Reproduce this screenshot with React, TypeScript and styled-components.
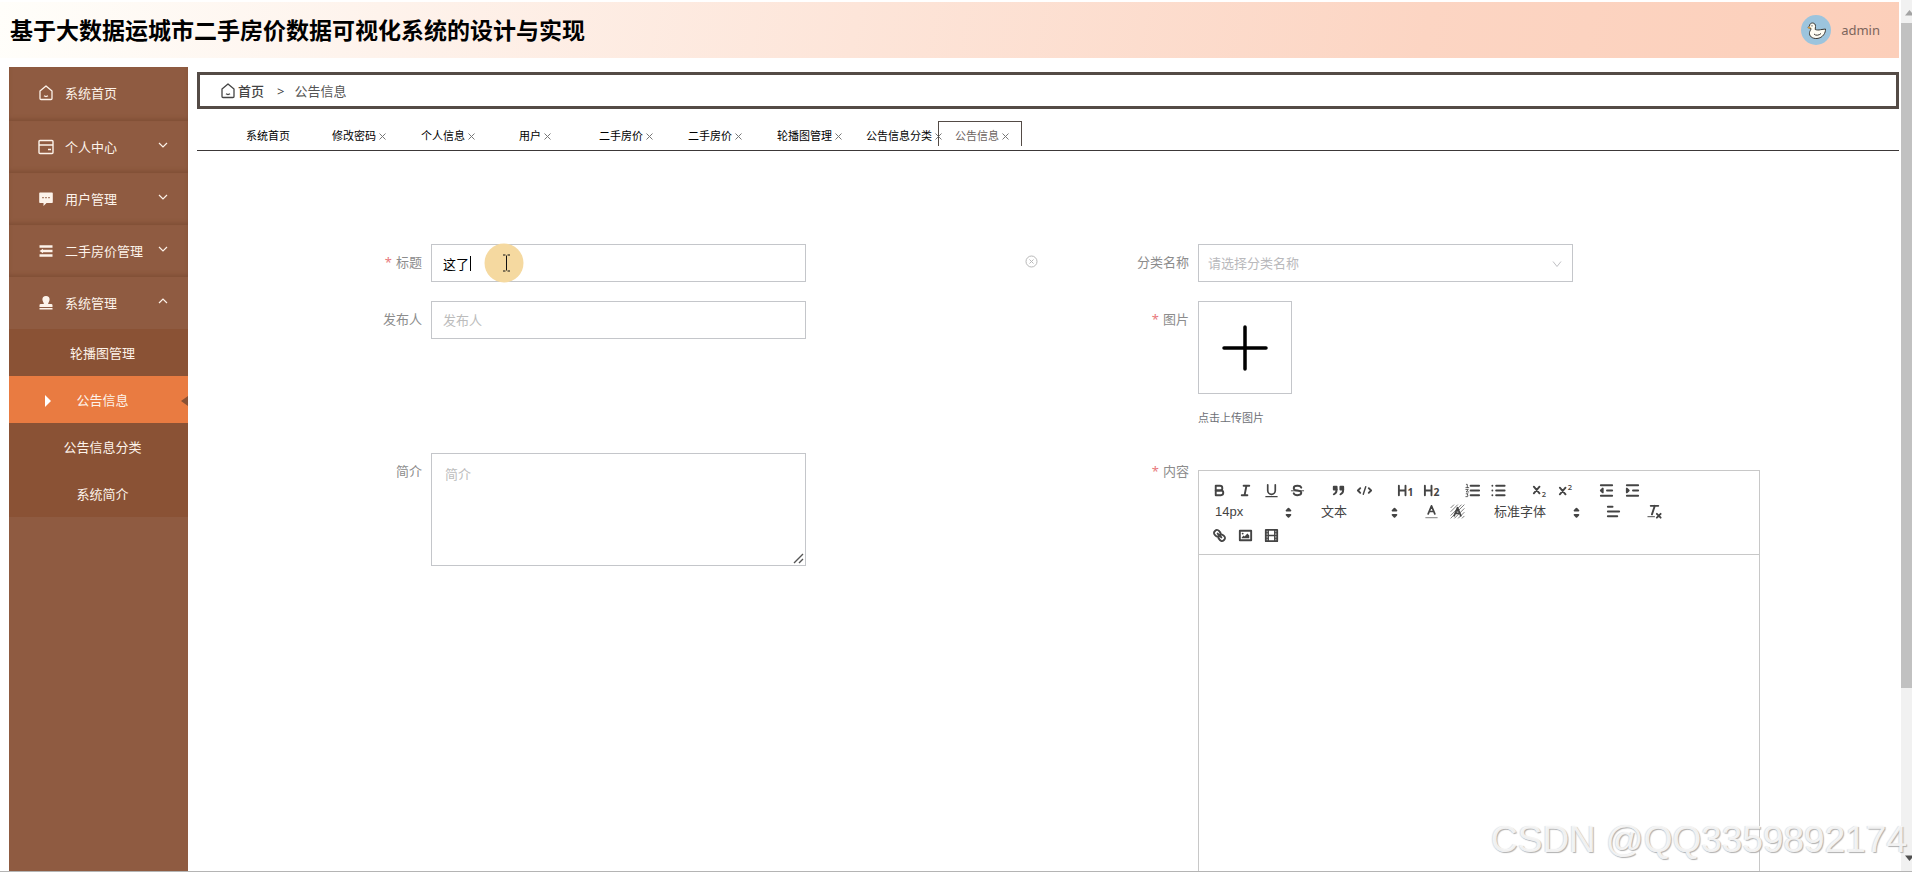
import React from 'react';
import styled, { createGlobalStyle, css } from 'styled-components';

const GlobalStyle = createGlobalStyle`
  * { box-sizing: border-box; }
  body {
    margin: 0;
    background: #fff;
    font-family: "Noto Sans", "Noto Sans CJK SC", sans-serif;
    font-size: 13px;
    line-height: 20px;
    color: #000;
  }
  button, input, select, textarea { font: inherit; color: inherit; }
  button { background: none; border: 0; padding: 0; cursor: pointer; }
  a { color: inherit; text-decoration: none; }
`;

const Screen = styled.div`
  position: relative;
  display: flex;
  gap: 2px;
  height: 100vh;
  overflow: hidden;
  border-bottom: 1px solid #b4b4b4;
`;

const Page = styled.div`
  flex: 1;
  min-width: 0;
  display: flex;
  flex-direction: column;
  padding-top: 2px;
`;

const Header = styled.header`
  flex: none;
  display: flex;
  align-items: center;
  justify-content: space-between;
  height: 56px;
  padding: 0 19px 0 10px;
  background: linear-gradient(100deg, #fffefa 0%, #fef3ec 20%, #fde5d9 45%, #fcd5c3 75%, #fccfba 100%);
`;

const SystemTitle = styled.h1`
  margin: 0;
  font-size: 23px;
  line-height: 32px;
  font-weight: 700;
  white-space: nowrap;
`;

const Account = styled.div`
  display: flex;
  align-items: center;
  gap: 10px;
  color: #7d655b;
`;

const Body = styled.div`
  flex: 1;
  min-height: 0;
  display: flex;
  gap: 9px;
  padding: 9px 0 0 9px;
`;

const Sidebar = styled.nav`
  flex: none;
  width: 179px;
  background: #8f5b41;
  color: #fdf3ea;
`;

const MenuItem = styled.button<{ $first?: boolean; $last?: boolean }>`
  display: flex;
  align-items: center;
  width: 100%;
  height: ${p => (p.$first ? 54 : 52)}px;
  padding: 0 20px ${p => (p.$first ? 2 : 0)}px 29px;
  text-align: left;
  ${p => !p.$last && css`box-shadow: inset 0 -3px 4px -1px #7f4e35;`}
`;

const MenuText = styled.span`
  flex: 1;
  margin-left: 11px;
  white-space: nowrap;
`;

const SubMenu = styled.div`
  background: #8a5235;
`;

const SubItem = styled.a<{ $active?: boolean }>`
  position: relative;
  display: flex;
  align-items: center;
  justify-content: center;
  height: 47px;
  padding-left: 8px;
  background: ${p => (p.$active ? '#e97b41' : 'transparent')};
`;

const ActiveMark = styled.svg<{ $side: 'left' | 'right' }>`
  position: absolute;
  top: 50%;
  margin-top: -5px;
  ${p => (p.$side === 'left' ? 'left: 36px;' : 'right: 0;')}
`;

const Main = styled.main`
  flex: 1;
  min-width: 0;
  padding-top: 5px;
`;

const Breadcrumb = styled.div`
  display: flex;
  align-items: center;
  height: 37px;
  padding-left: 20px;
  border: 3px solid #544b46;
  color: #555;
`;

const Home = styled.a`
  display: flex;
  align-items: center;
  gap: 2px;
  color: #444;
  font-weight: 500;
`;

const Separator = styled.span`
  margin: 0 10px 0 13px;
  color: #444;
`;

const Tabs = styled.div`
  display: flex;
  align-items: flex-start;
  gap: 5px;
  height: 42px;
  padding: 12px 0 0 29px;
  border-bottom: 1px solid #3c3838;
`;

const Tab = styled.div<{ $active?: boolean }>`
  flex: none;
  width: 84px;
  height: 25px;
  padding: 0 16px;
  border: 1px solid ${p => (p.$active ? '#544b46' : 'transparent')};
  border-bottom: 0;
  font-size: 11px;
  line-height: 28px;
  text-align: center;
  white-space: nowrap;
  color: ${p => (p.$active ? '#6b625e' : '#000')};
`;

const TabClose = styled.button`
  margin-left: 3px;
  line-height: 11px;
  color: #777;
`;

const Form = styled.form`
  display: grid;
  grid-template-columns: 1fr 1fr;
  grid-template-rows: 57px 152px auto;
  padding: 93px 84px 0;
`;

const Field = styled.div`
  display: flex;
  align-items: flex-start;
  min-width: 0;
`;

const Label = styled.label<{ $required?: boolean }>`
  flex: none;
  width: 150px;
  padding-right: 9px;
  line-height: 37px;
  text-align: right;
  color: #8c8c8c;
  ${p => p.$required && css`&::before { content: '*'; margin-right: 4px; color: #e8787c; }`}
`;

const Control = styled.div`
  position: relative;
  width: 100%;
  max-width: 375px;
`;

const boxStyle = css`
  display: block;
  width: 100%;
  border: 1px solid #c4c6ca;
  border-radius: 0;
  background: #fff;
  outline: none;
  &::placeholder { color: #bcbcbc; opacity: 1; }
`;

const TextInput = styled.input`
  ${boxStyle}
  height: 38px;
  padding: 0 11px;
`;

const TextArea = styled.textarea`
  ${boxStyle}
  height: 113px;
  padding: 10px 13px;
  resize: none;
`;

const SelectBox = styled.select`
  ${boxStyle}
  height: 38px;
  padding: 0 9px;
  appearance: none;
  color: #b9b9bc;
`;

const SelectArrow = styled.svg`
  position: absolute;
  right: 11px;
  top: 15px;
  pointer-events: none;
`;

const ResizeGrip = styled.svg`
  position: absolute;
  right: 2px;
  bottom: 2px;
  pointer-events: none;
`;

const Caret = styled.span`
  position: absolute;
  left: 39px;
  top: 12px;
  width: 1px;
  height: 15px;
  background: #000;
`;

const Pointer = styled.svg`
  position: absolute;
  left: 53px;
  top: -1px;
  pointer-events: none;
`;

const Spacer = styled.div`
  flex: 1;
`;

const ClearButton = styled.button`
  flex: none;
  display: flex;
  margin: 11px 10px 0 0;
`;

const UploadButton = styled.button`
  display: flex;
  align-items: center;
  justify-content: center;
  width: 94px;
  height: 93px;
  border: 1px solid #c4c6ca;
`;

const UploadTip = styled.p`
  margin: 14px 0 0;
  font-size: 11px;
  color: #6d7076;
`;

const Editor = styled.div`
  flex: 1;
  max-width: 562px;
  margin-top: 17px;
  border: 1px solid #c8c8c8;
`;

const Toolbar = styled.div`
  padding: 9px 6px 8px 7px;
  border-bottom: 1px solid #c8c8c8;
  color: #444;
`;

const ToolRow = styled.div`
  display: flex;
  align-items: center;
  gap: 15px;
  height: 21px;
  &:last-child { margin-top: 3px; }
`;

const ToolGroup = styled.div`
  display: flex;
`;

const ToolButton = styled.button`
  display: flex;
  align-items: center;
  justify-content: center;
  width: 26px;
  height: 21px;
`;

const Picker = styled.div<{ $wide?: boolean }>`
  position: relative;
  width: ${p => (p.$wide ? 100 : 91)}px;
`;

const PickerSelect = styled.select`
  display: block;
  width: 100%;
  height: 21px;
  padding: 0 0 0 9px;
  border: 0;
  background: none;
  appearance: none;
  font-family: "Liberation Sans", "Noto Sans CJK SC", sans-serif;
  color: #444;
`;

const PickerArrows = styled.svg`
  position: absolute;
  right: 0;
  top: 3px;
  pointer-events: none;
`;

const EditorBody = styled.div`
  min-height: 460px;
  padding: 12px 15px;
  outline: none;
`;

const ScrollTrack = styled.div`
  flex: none;
  display: flex;
  flex-direction: column;
  justify-content: space-between;
  width: 11px;
  padding: 9px 0;
  background: #f1f1f1;
  overflow: hidden;
`;

const ScrollThumb = styled.div`
  flex: none;
  height: 78%;
  margin: 7px 0 auto;
  background: #c1c1c1;
`;

const ScrollArrow = styled.svg`
  flex: none;
  margin-left: 4px;
`;

const Watermark = styled.div`
  position: absolute;
  right: 5px;
  bottom: 10px;
  font-family: "Liberation Sans", sans-serif;
  font-size: 37px;
  line-height: 42px;
  color: rgba(250, 250, 250, 0.9);
  text-shadow: 1px 1px 1px #b0b0b0, -1px 0 1px #e0e0e0;
  white-space: nowrap;
  pointer-events: none;
`;

const HomeIcon = ({ size = 16 }: { size?: number }) => (
  <svg width={size} height={size} viewBox="0 0 16 16" fill="none" stroke="currentColor" strokeWidth="1.3" strokeLinejoin="round">
    <path d="M2 6 8 1l6 5v7.5a1 1 0 0 1-1 1H3a1 1 0 0 1-1-1Z" />
    <path d="M6 10.8q2 1.4 4 0" />
  </svg>
);

const CardIcon = () => (
  <svg width="16" height="16" viewBox="0 0 16 16" fill="none" stroke="currentColor" strokeWidth="1.4">
    <rect x="1" y="1.5" width="14" height="13" rx="1" />
    <path d="M1 6h14M10 10.5h3" />
  </svg>
);

const ChatIcon = () => (
  <svg width="16" height="16" viewBox="0 0 16 16">
    <path fill="currentColor" d="M2 1.5h12a.8.8 0 0 1 .8.8v9a.8.8 0 0 1-.8.8H8.500L5.500 15v-2.900H2a.8.8 0 0 1-.8-.8v-9a.8.8 0 0 1 .8-.8Z" />
    <path stroke="#8f5b41" strokeWidth="1.300" d="M4.300 6.700h1.400M7.300 6.700h1.400M10.300 6.700h1.400" />
  </svg>
);

const ListIcon = () => (
  <svg width="16" height="16" viewBox="0 0 16 16" fill="none" stroke="currentColor" strokeWidth="2.600">
    <path d="M1.500 3.500h13M5 8h9.500M1.500 12.500h13" />
    <path d="M1.500 8 5 5.800v4.400Z" fill="currentColor" stroke="none" />
  </svg>
);

const StampIcon = () => (
  <svg width="16" height="16" viewBox="0 0 16 16" fill="currentColor">
    <path d="M8 1a3.600 3.600 0 0 1 3.600 3.700c0 1.600-1.500 2.700-1.500 4.300h3.100a1.300 1.300 0 0 1 1.300 1.300v1.700h-13v-1.700A1.300 1.300 0 0 1 2.800 9h3.100c0-1.600-1.500-2.700-1.500-4.300A3.600 3.600 0 0 1 8 1ZM1.500 13h13v1.500h-13Z" />
  </svg>
);

const Chevron = ({ up }: { up?: boolean }) => (
  <svg width="10" height="12" viewBox="0 0 10 12" fill="none" stroke="currentColor" strokeWidth="1.200">
    <path d={up ? 'M1 6l4-4 4 4' : 'M1 2l4 4 4-4'} />
  </svg>
);

const DuckAvatar = () => (
  <svg width="30" height="30" viewBox="0 0 30 30" role="img" aria-label="avatar">
    <circle cx="15" cy="15" r="15" fill="#9cc4dd" />
    <path
      d="M7 12.500 8.500 11c0-2 1.500-3 3-3 2 0 3.200 1.500 3 3.500l-.3 3c1.500.6 3.500.7 5.300.2l5-.7c.3 3.500-2.500 9-8.500 9.500-5 .3-8-2.500-7.500-6 .2-1.500 1.500-2.500 1.500-4Z"
      fill="#fffdf3" stroke="#3b3a36" strokeWidth="1" strokeLinejoin="round"
    />
    <path d="M13 19c1.500 1.800 5 1.600 7-.5" fill="none" stroke="#3b3a36" strokeWidth="1" />
    <path d="M7 12.500l2.500.4" stroke="#d99a3c" strokeWidth="1.500" />
    <circle cx="11" cy="10.800" r=".6" fill="#222" />
  </svg>
);

const ToolIcon = ({ children }: { children: React.ReactNode }) => (
  <svg width="17" height="17" viewBox="0 0 18 18" fill="none" stroke="#444" strokeWidth="2" strokeLinecap="round" strokeLinejoin="round">
    {children}
  </svg>
);

const Glyph = ({ x, y, size, children, weight = 700 }: { x: number; y: number; size: number; children: string; weight?: number }) => (
  <text x={x} y={y} fontSize={size} fontWeight={weight} fontFamily="Open Sans, sans-serif" fill="#444" stroke="none">
    {children}
  </text>
);

const icons: Record<string, React.ReactNode> = {
  bold: (
    <>
      <path d="M5 4h4.500a2.500 2.500 0 0 1 0 5H5Z" />
      <path d="M5 9h5.500a2.500 2.500 0 0 1 0 5H5Z" />
    </>
  ),
  italic: <path d="M7 4h6M5 14h6M8 14l2-10" />,
  underline: (
    <>
      <path d="M5 3v6a4 4 0 0 0 8 0V3" strokeWidth="1.800" />
      <path d="M3 15.500h12" strokeWidth="1.200" />
    </>
  ),
  strike: (
    <>
      <path d="M13 6C12.500 4.700 11 4 9 4 6.700 4 5 5 5 6.500S6.500 8.700 9 9s4 1 4 2.500S11.300 14 9 14c-2 0-3.500-.7-4-2" />
      <path d="M2.500 9.300h13" strokeWidth="1" />
    </>
  ),
  quote: (
    <g fill="#444">
      <path d="M4 5h3v3H4ZM11 5h3v3h-3Z" />
      <path d="M7 8c0 4-3 5-3 5M14 8c0 4-3 5-3 5" fill="none" />
    </g>
  ),
  code: (
    <>
      <path d="M4.500 6.500 2 9l2.500 2.500M13.500 6.500 16 9l-2.500 2.500" />
      <path d="M10.300 5 7.700 13" strokeWidth="1.500" />
    </>
  ),
  h1: (
    <>
      <path d="M2 4v10M9 4v10M2 9h7" />
      <Glyph x={11} y={15} size={11}>1</Glyph>
    </>
  ),
  h2: (
    <>
      <path d="M2 4v10M9 4v10M2 9h7" />
      <Glyph x={11} y={15} size={11}>2</Glyph>
    </>
  ),
  ordered: (
    <>
      <path d="M7 4h9M7 9h9M7 14h9" />
      <path d="M2.500 2.500h1V6M2 6h3M2 8h2.500L2.300 10.500H5M2.300 12.500h2l-1 1.300 1 .5-.5 1.200H2" strokeWidth=".9" />
    </>
  ),
  bullet: <path d="M6.500 4h9M6.500 9h9M6.500 14h9M2.500 4h0M2.500 9h0M2.500 14h0" />,
  sub: (
    <>
      <path d="M3 5l6 7M9 5l-6 7" />
      <Glyph x={11.5} y={16} size={8} weight={600}>2</Glyph>
    </>
  ),
  sup: (
    <>
      <path d="M3 6l6 7M9 6l-6 7" />
      <Glyph x={11.5} y={8} size={8} weight={600}>2</Glyph>
    </>
  ),
  outdent: (
    <>
      <path d="M3 3.500h12M3 14.500h12M9.500 9H15" />
      <path d="M5 7v4L3 9Z" fill="#444" />
    </>
  ),
  indent: (
    <>
      <path d="M3 3.500h12M3 14.500h12M9.500 9H15" />
      <path d="M3 7v4l2-2Z" fill="#444" />
    </>
  ),
  color: (
    <>
      <path d="M5.500 11.500 9 3l3.500 8.500M6.800 9h4.400" strokeWidth="1.800" />
      <path d="M3 15.500h12" stroke="#999" strokeWidth="1.200" />
    </>
  ),
  background: (
    <>
      <path d="M2 5l3-3M2 9l7-7M2 13 13 2M2 16 16 2M6 16 16 6M10 16l6-6M14 16l2-2" stroke="#777" strokeWidth="1" />
      <path d="M5.500 13.500 9 5l3.500 8.500M6.800 11h4.400" strokeWidth="1.900" />
    </>
  ),
  align: <path d="M3 4h5M3 9h12M3 14h10" />,
  clean: (
    <>
      <path d="M5 3h8M6.300 12 9.300 3" />
      <path d="M11.500 11.500l4 4M15.500 11.500l-4 4" />
      <path d="M2 14.500h7" strokeWidth="1" />
    </>
  ),
  link: (
    <>
      <path d="M7 7l4 4" />
      <path d="M8.900 4.577a3.476 3.476 0 0 1 .36 4.679A3.476 3.476 0 0 1 4.577 8.900C3.185 7.500 2.035 6.400 4.217 4.217S7.500 3.185 8.900 4.577Z" />
      <path d="M13.423 9.100a3.476 3.476 0 0 0-4.679-.36 3.476 3.476 0 0 0 .36 4.679c1.392 1.392 2.500 2.542 4.679.36S14.815 10.500 13.423 9.100Z" />
    </>
  ),
  image: (
    <>
      <rect x="3" y="4" width="12" height="10" />
      <circle cx="6" cy="7" r="1" fill="#444" stroke="none" />
      <path d="M5 12v-1l2-2 1 1 3-3 2 2v3Z" fill="#444" stroke="none" />
    </>
  ),
  video: (
    <>
      <rect x="3" y="3" width="12" height="12" />
      <path d="M5.500 3v12M12.500 3v12M5.500 9h7" strokeWidth="1.600" />
      <path d="M3 6h2M3 9h2M3 12h2M13 6h2M13 9h2M13 12h2" strokeWidth="1" />
    </>
  ),
};

const Tools = ({ names }: { names: string[] }) => (
  <ToolGroup>
    {names.map(name => (
      <ToolButton key={name} type="button" aria-label={name}>
        <ToolIcon>{icons[name]}</ToolIcon>
      </ToolButton>
    ))}
  </ToolGroup>
);

const FormatPicker = ({ label, value, wide }: { label: string; value: string; wide?: boolean }) => (
  <Picker $wide={wide}>
    <PickerSelect aria-label={label} defaultValue={value}>
      <option>{value}</option>
    </PickerSelect>
    <PickerArrows width="17" height="17" viewBox="0 0 18 18" fill="#444" stroke="#444" strokeWidth="2" strokeLinejoin="round">
      <path d="M7 11.500h4l-2 2ZM7 7h4L9 5Z" />
    </PickerArrows>
  </Picker>
);

const menu = [
  { text: '系统首页', icon: <HomeIcon /> },
  { text: '个人中心', icon: <CardIcon />, arrow: 'down' },
  { text: '用户管理', icon: <ChatIcon />, arrow: 'down' },
  { text: '二手房价管理', icon: <ListIcon />, arrow: 'down' },
  { text: '系统管理', icon: <StampIcon />, arrow: 'up' },
];

const subMenu = ['轮播图管理', '公告信息', '公告信息分类', '系统简介'];

const tabs = ['系统首页', '修改密码', '个人信息', '用户', '二手房价', '二手房价', '轮播图管理', '公告信息分类', '公告信息'];

export default function App() {
  return (
    <>
      <GlobalStyle />
      <Screen>
        <Page>
          <Header>
            <SystemTitle>基于大数据运城市二手房价数据可视化系统的设计与实现</SystemTitle>
            <Account>
              <DuckAvatar />
              <span>admin</span>
            </Account>
          </Header>
          <Body>
            <Sidebar>
              {menu.map((item, i) => (
                <MenuItem key={item.text} type="button" $first={i === 0} $last={i === menu.length - 1}>
                  {item.icon}
                  <MenuText>{item.text}</MenuText>
                  {item.arrow && <Chevron up={item.arrow === 'up'} />}
                </MenuItem>
              ))}
              <SubMenu>
                {subMenu.map(text => {
                  const active = text === '公告信息';
                  return (
                    <SubItem key={text} href="#" $active={active}>
                      {active && (
                        <ActiveMark $side="left" width="7" height="12" viewBox="0 0 7 12" fill="#fff">
                          <path d="M0 0l6 6-6 6Z" />
                        </ActiveMark>
                      )}
                      {text}
                      {active && (
                        <ActiveMark $side="right" width="8" height="12" viewBox="0 0 8 12" fill="#8a5235">
                          <path d="M8 1v10L1 6Z" />
                        </ActiveMark>
                      )}
                    </SubItem>
                  );
                })}
              </SubMenu>
            </Sidebar>
            <Main>
              <Breadcrumb>
                <Home href="#">
                  <HomeIcon />
                  首页
                </Home>
                <Separator>&gt;</Separator>
                <span>公告信息</span>
              </Breadcrumb>
              <Tabs>
                {tabs.map((text, i) => (
                  <Tab key={i} $active={i === tabs.length - 1}>
                    {text}
                    {i > 0 && (
                      <TabClose type="button" aria-label={`关闭${text}`}>
                        <svg width="7" height="7" viewBox="0 0 7 7" stroke="currentColor" strokeWidth="1">
                          <path d="M.5.5l6 6M6.500.5l-6 6" />
                        </svg>
                      </TabClose>
                    )}
                  </Tab>
                ))}
              </Tabs>
              <Form>
                <Field>
                  <Label htmlFor="title" $required>标题</Label>
                  <Control>
                    <TextInput id="title" defaultValue="这了" />
                    <Caret />
                    <Pointer width="40" height="40" viewBox="0 0 40 40">
                      <circle cx="20" cy="20" r="19.500" fill="#f5d9a0" />
                      <path d="M19 12h2.500M23.500 12H26M19 28h2.500M23.500 28H26M22.500 12.500v15" stroke="#111" strokeWidth="1" />
                    </Pointer>
                  </Control>
                  <Spacer />
                  <ClearButton type="button" aria-label="清空">
                    <svg width="13" height="13" viewBox="0 0 13 13" fill="none" stroke="#b8b8b8" strokeWidth="1">
                      <circle cx="6.500" cy="6.500" r="5.500" />
                      <path d="M4.500 4.500l4 4M8.500 4.500l-4 4" />
                    </svg>
                  </ClearButton>
                </Field>
                <Field>
                  <Label htmlFor="category">分类名称</Label>
                  <Control>
                    <SelectBox id="category" defaultValue="">
                      <option value="">请选择分类名称</option>
                    </SelectBox>
                    <SelectArrow width="10" height="10" viewBox="0 0 10 10" fill="none" stroke="#c0c0c4" strokeWidth="1">
                      <path d="M1 2.500l4 5 4-5" />
                    </SelectArrow>
                  </Control>
                </Field>
                <Field>
                  <Label htmlFor="publisher">发布人</Label>
                  <Control>
                    <TextInput id="publisher" placeholder="发布人" />
                  </Control>
                </Field>
                <Field>
                  <Label htmlFor="picture" $required>图片</Label>
                  <div>
                    <UploadButton id="picture" type="button" aria-label="点击上传图片">
                      <svg width="46" height="46" viewBox="0 0 46 46" stroke="#000" strokeWidth="3.500" strokeLinecap="round">
                        <path d="M23 2v42M2 23h42" />
                      </svg>
                    </UploadButton>
                    <UploadTip>点击上传图片</UploadTip>
                  </div>
                </Field>
                <Field>
                  <Label htmlFor="intro">简介</Label>
                  <Control>
                    <TextArea id="intro" placeholder="简介" />
                    <ResizeGrip width="11" height="11" viewBox="0 0 11 11" stroke="#555" strokeWidth="1.400">
                      <path d="M1 10 10 1M6 10l4-4" />
                    </ResizeGrip>
                  </Control>
                </Field>
                <Field>
                  <Label id="content-label" $required>内容</Label>
                  <Editor>
                    <Toolbar>
                      <ToolRow>
                        <Tools names={['bold', 'italic', 'underline', 'strike']} />
                        <Tools names={['quote', 'code']} />
                        <Tools names={['h1', 'h2']} />
                        <Tools names={['ordered', 'bullet']} />
                        <Tools names={['sub', 'sup']} />
                        <Tools names={['outdent', 'indent']} />
                      </ToolRow>
                      <ToolRow>
                        <FormatPicker label="字号" value="14px" />
                        <FormatPicker label="标题级别" value="文本" />
                        <Tools names={['color', 'background']} />
                        <FormatPicker label="字体" value="标准字体" wide />
                        <Tools names={['align']} />
                        <Tools names={['clean']} />
                      </ToolRow>
                      <ToolRow>
                        <Tools names={['link', 'image', 'video']} />
                      </ToolRow>
                    </Toolbar>
                    <EditorBody role="textbox" aria-labelledby="content-label" contentEditable suppressContentEditableWarning />
                  </Editor>
                </Field>
              </Form>
            </Main>
          </Body>
        </Page>
        <ScrollTrack>
          <ScrollArrow width="8" height="7" viewBox="0 0 8 7" fill="#a3a3a3">
            <path d="M0 6.500 4.500 1 9 6.500Z" />
          </ScrollArrow>
          <ScrollThumb />
          <ScrollArrow width="8" height="7" viewBox="0 0 8 7" fill="#505050">
            <path d="M0 .5h9L4.500 6Z" />
          </ScrollArrow>
        </ScrollTrack>
        <Watermark>CSDN @QQ3359892174</Watermark>
      </Screen>
    </>
  );
}
